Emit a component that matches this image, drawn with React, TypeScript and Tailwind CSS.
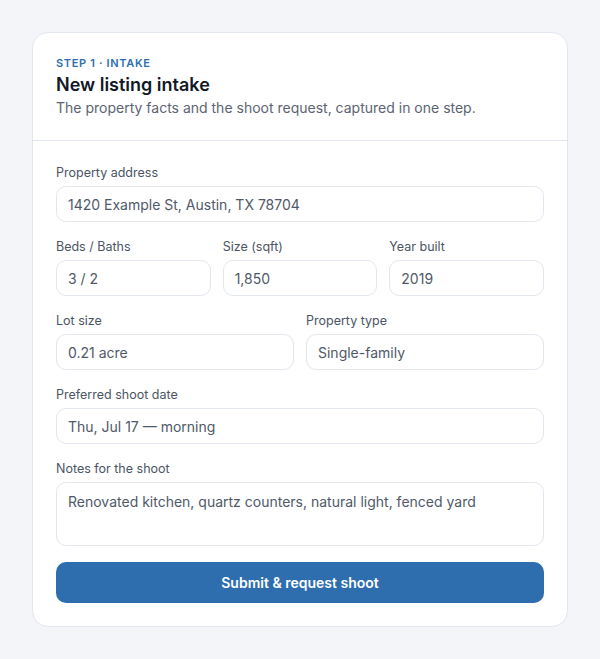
import React from "react";

function Field({ label, value }: { label: string; value: string }) {
  return (
    <div className="flex flex-col min-w-0">
      <label className="text-[12.5px] leading-4 text-[#4b5563] mb-[5px]">{label}</label>
      <div className="h-9 rounded-[10px] border border-[#e2e6ee] bg-white px-[11px] flex items-center text-[14px] text-[#4f5968] truncate">
        {value}
      </div>
    </div>
  );
}

export default function App() {
  return (
    <div
      className="min-h-screen bg-[#f4f5f9] p-8"
      style={{ fontFamily: "Inter, 'Noto Sans', sans-serif" }}
    >
      <div className="w-[536px] rounded-2xl border border-[#e2e6ee] bg-white">
        <div className="px-[23px] pt-[22px] pb-[22px] border-b border-[#e2e6ee]">
          <div className="text-[11px] leading-4 font-semibold tracking-[0.06em] text-[#2f6fb0]">
            STEP 1 · INTAKE
          </div>
          <div className="mt-[2px] text-[18px] leading-6 font-semibold text-[#111827]">
            New listing intake
          </div>
          <div className="mt-[1px] text-[14px] leading-5 text-[#5b6472]">
            The property facts and the shoot request, captured in one step.
          </div>
        </div>
        <div className="px-[23px] pt-[24px] pb-[23px] flex flex-col gap-4">
          <div className="flex flex-col gap-[17px]">
            <Field label="Property address" value="1420 Example St, Austin, TX 78704" />
            <div className="grid grid-cols-3 gap-3">
              <Field label="Beds / Baths" value="3 / 2" />
              <Field label="Size (sqft)" value="1,850" />
              <Field label="Year built" value="2019" />
            </div>
            <div className="grid grid-cols-2 gap-3">
              <Field label="Lot size" value="0.21 acre" />
              <Field label="Property type" value="Single-family" />
            </div>
            <Field label="Preferred shoot date" value="Thu, Jul 17 — morning" />
            <div className="flex flex-col">
              <label className="text-[12.5px] leading-4 text-[#4b5563] mb-[5px]">Notes for the shoot</label>
              <div className="h-16 rounded-[10px] border border-[#e2e6ee] bg-white px-[11px] pt-[9px] text-[14px] leading-5 text-[#4f5968]">
                Renovated kitchen, quartz counters, natural light, fenced yard
              </div>
            </div>
          </div>
          <button className="h-[41px] rounded-[10px] bg-[#2e6eae] text-white text-[14px] font-semibold">
            Submit &amp; request shoot
          </button>
        </div>
      </div>
    </div>
  );
}
